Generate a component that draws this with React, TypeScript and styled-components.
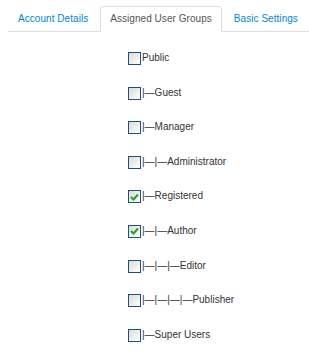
import styled, { createGlobalStyle } from "styled-components";

const GlobalStyle = createGlobalStyle`
  body {
    margin: 0;
    background: #fff;
    font-family: "Liberation Sans", Arial, sans-serif;
  }
`;

const Page = styled.div`
  padding: 6px 0 0 8px;
`;

const TabBar = styled.ul`
  display: flex;
  margin: 0;
  padding: 0;
  list-style: none;
  border-bottom: 1px solid #ddd;
`;

const Tab = styled.li<{ active?: boolean }>`
  flex-shrink: 0;
  white-space: nowrap;
  margin: 0 2px -1px 0;
  padding: 4px 9px;
  line-height: 16px;
  font-size: 10px;
  letter-spacing: 0.05px;
  border: 1px solid ${(p) => (p.active ? "#ddd" : "transparent")};
  border-bottom-color: transparent;
  border-radius: 4px 4px 0 0;
  background: ${(p) => (p.active ? "#fff" : "transparent")};
  color: ${(p) => (p.active ? "#555" : "#0088cc")};
  cursor: pointer;
`;

const GroupList = styled.div`
  display: flex;
  flex-direction: column;
  gap: 21.6px;
  padding: 20px 0 0 120px;
`;

const Row = styled.label`
  display: flex;
  align-items: flex-start;
  height: 13px;
  white-space: nowrap;
  font-size: 10px;
  line-height: 12px;
  color: #333;
`;

const Box = styled.span`
  display: flex;
  align-items: center;
  justify-content: center;
  box-sizing: border-box;
  width: 13px;
  height: 13px;
  margin-right: 1px;
  border: 1px solid #1c5180;
  background: linear-gradient(135deg, #dcdcd7 0%, #f4f4f0 70%, #fff 100%);
  flex-shrink: 0;
`;

const Check = () => (
  <svg width="9" height="8" viewBox="0 0 9 8">
    <path d="M1 4 L3.5 6.5 L8 1.5" fill="none" stroke="#21a121" strokeWidth="2" />
  </svg>
);

const groups = [
  { name: "Public", depth: 0, checked: false },
  { name: "Guest", depth: 1, checked: false },
  { name: "Manager", depth: 1, checked: false },
  { name: "Administrator", depth: 2, checked: false },
  { name: "Registered", depth: 1, checked: true },
  { name: "Author", depth: 2, checked: true },
  { name: "Editor", depth: 3, checked: false },
  { name: "Publisher", depth: 4, checked: false },
  { name: "Super Users", depth: 1, checked: false },
];

export default function App() {
  return (
    <Page>
      <GlobalStyle />
      <TabBar>
        <Tab>Account Details</Tab>
        <Tab active>Assigned User Groups</Tab>
        <Tab>Basic Settings</Tab>
      </TabBar>
      <GroupList>
        {groups.map((g) => (
          <Row key={g.name}>
            <Box>{g.checked && <Check />}</Box>
            {"|—".repeat(g.depth)}
            {g.name}
          </Row>
        ))}
      </GroupList>
    </Page>
  );
}
